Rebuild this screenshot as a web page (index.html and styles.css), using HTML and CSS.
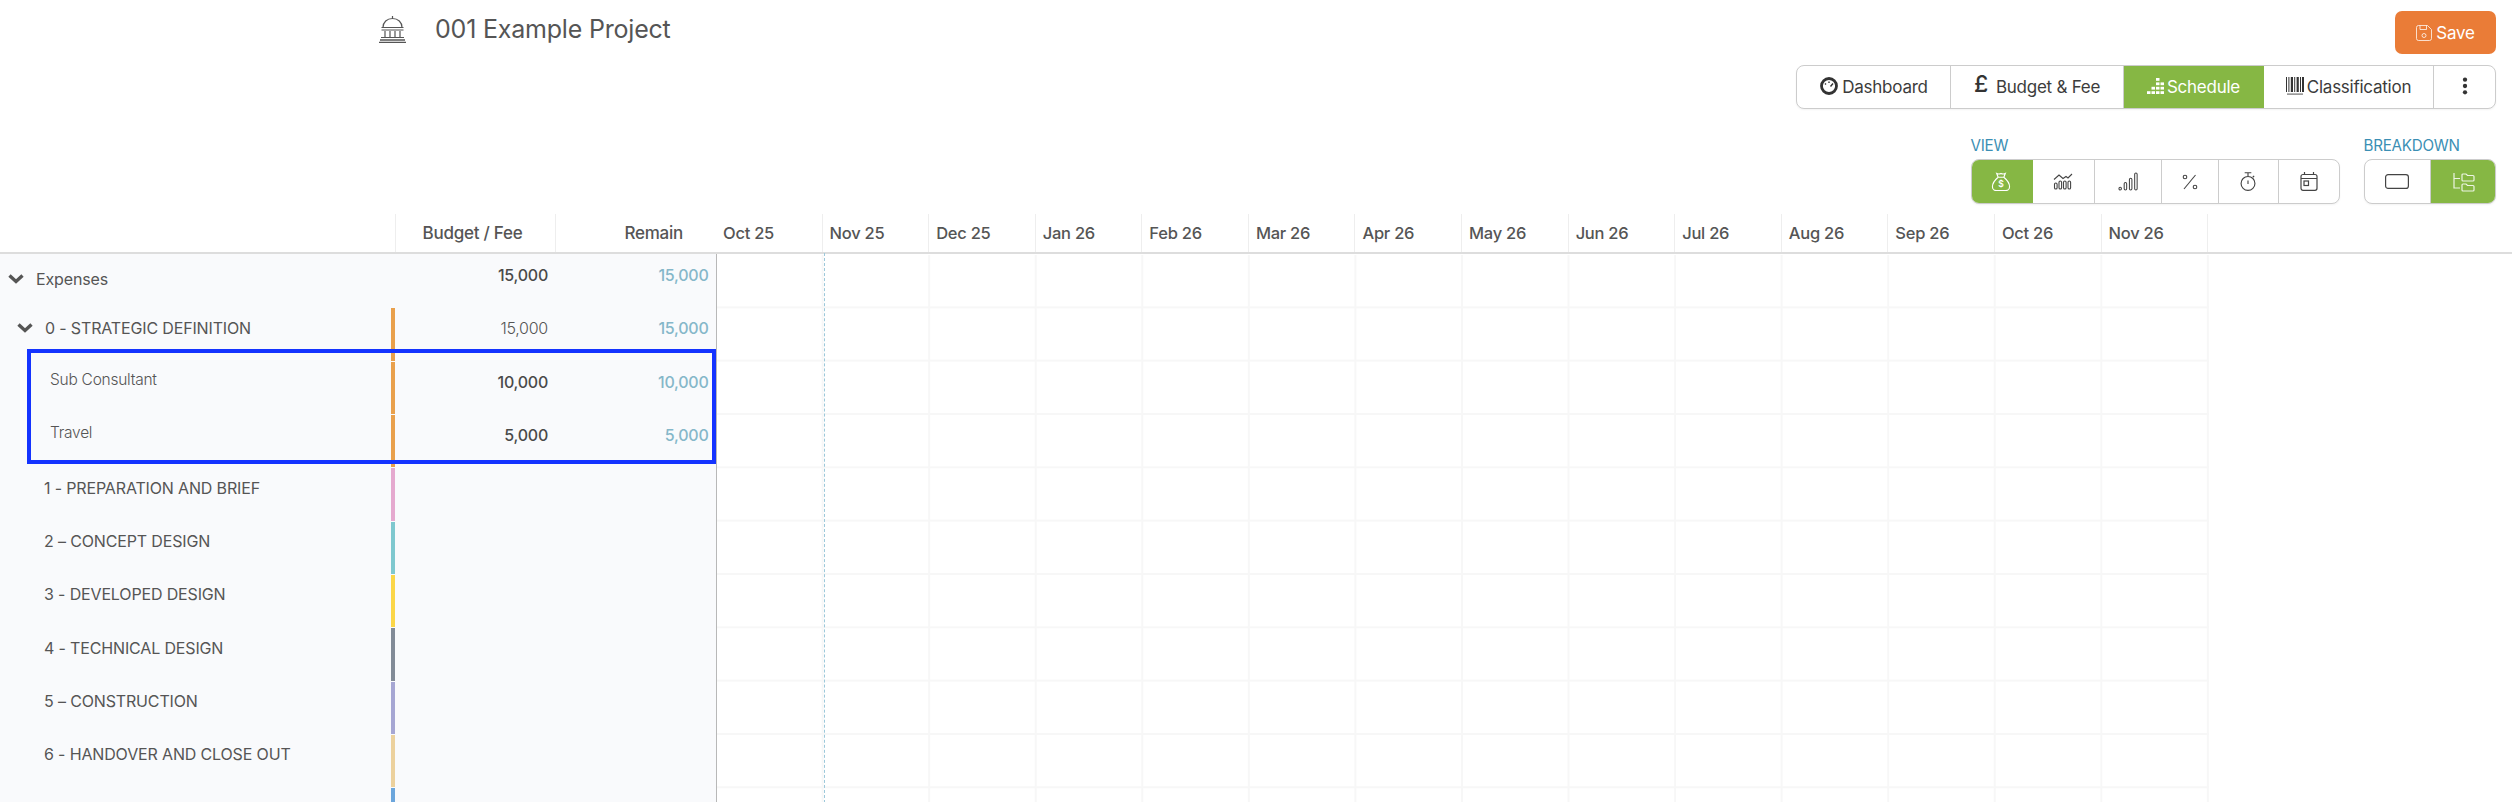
FILE: index.html
```html
<!DOCTYPE html>
<html lang="en">
<head>
<meta charset="utf-8">
<title>001 Example Project</title>
<link rel="stylesheet" href="styles.css">
</head>
<body>
<div class="page">
  <header class="topbar">
    <div class="project">
      <svg class="bank" viewBox="0 0 27 27" fill="none" stroke="#555" stroke-width="1.2"><path d="M13.5 0v2.5M4 11.5C4 6 8 2.5 13.5 2.5S23 6 23 11.5M2.5 11.5h22M2.5 14h22M6 15v6M11 15v6M16 15v6M21 15v6M2 21.5h23"/><path d="M1 24h25M0 26.5h27" stroke-width="1.4"/></svg>
      <h1 class="title">001 Example Project</h1>
    </div>
    <button class="save">
      <svg class="ico-save" viewBox="0 0 16 16" fill="none" stroke="#fff" stroke-opacity=".75" stroke-width="1"><path d="M2.5.5h9l4 4v9a2 2 0 0 1-2 2h-11a2 2 0 0 1-2-2v-11a2 2 0 0 1 2-2z"/><path d="M4 .5v4h6.5v-4"/><circle cx="8" cy="10.5" r="2"/></svg>
      <span>Save</span>
    </button>
  </header>

  <nav class="tabs-row">
    <div class="group tabs">
      <div class="tab w-dash">
        <svg class="i-dash" viewBox="0 0 20 18" fill="none" stroke="#333"><circle cx="10" cy="9" r="7.5" stroke-width="2.8"/><path d="M10 4.5v1.5M6 6.5l1 1M14 6.5l-2.5 3" stroke-width="1.4"/></svg>
        <span>Dashboard</span>
      </div>
      <div class="tab w-budget"><span class="pound">£</span><span>Budget &amp; Fee</span></div>
      <div class="tab w-sched active">
        <svg class="i-sched" viewBox="0 0 17 16" fill="#fff"><rect x="0" y="13.2" width="3.5" height="2.8"/><rect x="4.500" y="8.800" width="3.5" height="2.8"/><rect x="4.500" y="13.2" width="3.5" height="2.8"/><rect x="9" y="0" width="3.5" height="2.8"/><rect x="9" y="4.400" width="3.5" height="2.8"/><rect x="9" y="8.800" width="3.5" height="2.8"/><rect x="9" y="13.2" width="3.5" height="2.8"/><rect x="13.500" y="4.400" width="3.5" height="2.8"/><rect x="13.500" y="8.800" width="3.5" height="2.8"/><rect x="13.500" y="13.2" width="3.5" height="2.8"/></svg>
        <span>Schedule</span>
      </div>
      <div class="tab w-class">
        <svg class="i-bar" viewBox="0 0 18 18" fill="#333"><rect x="0" y="0" width="1" height="15"/><rect x="2.4" y="0" width="1" height="15"/><rect x="4.8" y="0" width="2.2" height="15"/><rect x="8.2" y="0" width="1" height="15"/><rect x="10.6" y="0" width="2.2" height="15"/><rect x="14" y="0" width="1" height="15"/><rect x="16" y="0" width="2" height="15"/><rect x="1" y="16.5" width="16" height="1.2" opacity=".7"/></svg>
        <span>Classification</span>
      </div>
      <div class="tab w-more">
        <svg class="i-more" viewBox="0 0 6 20" fill="#333"><circle cx="3" cy="3" r="2.4"/><circle cx="3" cy="10" r="2.4"/><circle cx="3" cy="17" r="2.4"/></svg>
      </div>
    </div>
  </nav>

  <section class="options">
    <div class="opt">
      <div class="opt-label">VIEW</div>
      <div class="group small">
        <div class="tab v1 active">
          <svg class="i-view" viewBox="0 0 20 20" fill="none" stroke="#fff" stroke-width="1.2"><path d="M7 5.5L5.5 1.5c1.5.8 3 .8 4.5 0 1.5.8 3 .8 4.5 0L13 5.5M7 5.5h6M7 5.5C4 8 1 12 1 15.5 1 18 3 19.500 5 19.500h10c2 0 4-1.500 4-4C19 12 16 8 13 5.500"/><text x="10" y="15.500" font-size="9" font-family="Inter" font-weight="600" fill="#fff" stroke="none" text-anchor="middle">$</text></svg>
        </div>
        <div class="tab v2">
          <svg class="i-view" viewBox="0 0 20 17" fill="none" stroke="#444" stroke-width="1.100"><path d="M1 6.500L6 2l4 3.500 3-2 2 1.500 4-4"/><rect x="1.500" y="10" width="2.600" height="6" rx="1.300"/><rect x="6" y="8" width="2.600" height="8" rx="1.300"/><rect x="10.500" y="8" width="2.600" height="8" rx="1.300"/><rect x="15" y="8" width="2.600" height="8" rx="1.300"/></svg>
        </div>
        <div class="tab v3">
          <svg class="i-view" viewBox="0 0 21 19" fill="none" stroke="#444" stroke-width="1.100"><rect x="1" y="15.500" width="2.600" height="3" rx="1.300"/><rect x="6.500" y="10.500" width="2.600" height="8" rx="1.300"/><rect x="12" y="6" width="2.600" height="12.500" rx="1.300"/><rect x="17.500" y=".5" width="2.600" height="18" rx="1.300"/></svg>
        </div>
        <div class="tab v4">
          <svg class="i-percent" viewBox="0 0 16 16" fill="none" stroke="#444" stroke-width="1.100"><path d="M13.500 1L2 15"/><circle cx="3" cy="3" r="1.800"/><circle cx="13" cy="13" r="1.800"/></svg>
        </div>
        <div class="tab v5">
          <svg class="i-view" viewBox="0 0 17 20" fill="none" stroke="#444" stroke-width="1.200"><path d="M5 .8h7M8.500 .8v3.400M13.500 5.500l1.500-1.500M8.500 9v3.500"/><circle cx="8.500" cy="12" r="7.300"/></svg>
        </div>
        <div class="tab v6">
          <svg class="i-view" viewBox="0 0 18 19" fill="none" stroke="#444" stroke-width="1.200"><rect x="1" y="2.500" width="16" height="15.800" rx="2"/><path d="M4.500 0v3M13.500 0v3M1 6.500h16"/><rect x="4" y="9" width="4.500" height="4.500"/></svg>
        </div>
      </div>
    </div>
    <div class="opt">
      <div class="opt-label">BREAKDOWN</div>
      <div class="group small">
        <div class="tab b1"><svg class="i-rect" viewBox="0 0 24 15" fill="none" stroke="#444" stroke-width="1.200"><rect x=".6" y=".6" width="22.800" height="13.800" rx="2.500"/></svg></div>
        <div class="tab b1 active"><svg class="i-tree" viewBox="0 0 22 20" fill="none" stroke="#fff" stroke-opacity=".85" stroke-width="1.200"><path d="M1 1v15h6M1 6.500h6"/><path d="M9 3a1 1 0 0 1 1-1h3l1.500 1.500H20a1 1 0 0 1 1 1V8a1 1 0 0 1-1 1H10a1 1 0 0 1-1-1zM9 13a1 1 0 0 1 1-1h3l1.500 1.500H20a1 1 0 0 1 1 1V18a1 1 0 0 1-1 1H10a1 1 0 0 1-1-1z"/></svg></div>
      </div>
    </div>
  </section>

  <div class="thead">
    <div class="th th-name"></div>
    <div class="th th-budget">Budget / Fee</div>
    <div class="th th-remain">Remain</div>
    <div class="months">
      <div class="month">Oct 25</div><div class="month">Nov 25</div><div class="month">Dec 25</div><div class="month">Jan 26</div><div class="month">Feb 26</div><div class="month">Mar 26</div><div class="month">Apr 26</div><div class="month">May 26</div><div class="month">Jun 26</div><div class="month">Jul 26</div><div class="month">Aug 26</div><div class="month">Sep 26</div><div class="month">Oct 26</div><div class="month">Nov 26</div>
    </div>
  </div>

  <div class="tbody">
    <div class="left">
      <div class="row">
        <div class="name lvl0"><svg class="chev" viewBox="0 0 16 10" fill="none" stroke="#555" stroke-width="3.400"><path d="M1.500 1.500L8 7.500l6.500-6"/></svg><span>Expenses</span></div>
        <div class="bar"></div>
        <div class="num strong top0">15,000</div>
        <div class="num rem top0">15,000</div>
      </div>
      <div class="row">
        <div class="name lvl1"><svg class="chev" viewBox="0 0 16 10" fill="none" stroke="#555" stroke-width="3.400"><path d="M1.500 1.500L8 7.500l6.500-6"/></svg><span>0 - STRATEGIC DEFINITION</span></div>
        <div class="bar orange"></div>
        <div class="num light">15,000</div>
        <div class="num rem">15,000</div>
      </div>
      <div class="row">
        <div class="name lvl2">Sub Consultant</div>
        <div class="bar orange"></div>
        <div class="num strong sub">10,000</div>
        <div class="num rem sub">10,000</div>
      </div>
      <div class="row">
        <div class="name lvl2">Travel</div>
        <div class="bar orange"></div>
        <div class="num strong sub">5,000</div>
        <div class="num rem sub">5,000</div>
      </div>
      <div class="row"><div class="name stage">1 - PREPARATION AND BRIEF</div><div class="bar pink"></div></div>
      <div class="row"><div class="name stage">2 – CONCEPT DESIGN</div><div class="bar teal"></div></div>
      <div class="row"><div class="name stage">3 - DEVELOPED DESIGN</div><div class="bar yellow"></div></div>
      <div class="row"><div class="name stage">4 - TECHNICAL DESIGN</div><div class="bar slate"></div></div>
      <div class="row"><div class="name stage">5 – CONSTRUCTION</div><div class="bar lavender"></div></div>
      <div class="row"><div class="name stage">6 - HANDOVER AND CLOSE OUT</div><div class="bar sand"></div></div>
      <div class="row"><div class="name stage">7 - USE</div><div class="bar blue"></div></div>
      <div class="highlight"></div>
    </div>
    <div class="timeline"><div class="today"></div></div>
  </div>
</div>
</body>
</html>
```
FILE: styles.css
```css
* { box-sizing: border-box; }
html, body { margin: 0; padding: 0; background: #fff; }
body { font-family: Inter, "Liberation Sans", sans-serif; color: #555; letter-spacing: -.25px; }
.page { width: 2512px; height: 802px; overflow: hidden; }

.topbar { display: flex; justify-content: space-between; align-items: flex-start; padding: 11px 16px 0 379px; height: 54px; }
.project { display: flex; align-items: center; height: 38px; gap: 29px; margin-top: -1px; }
.bank { width: 27px; height: 27px; }
.title { margin: 0; font-size: 25px; font-weight: 400; color: #555; letter-spacing: -.2px; }
.save { display: flex; align-items: center; justify-content: center; gap: 4px; width: 101px; height: 43px; background: #ea7c37; border: 0; border-radius: 7px; color: #fff; font: 400 17px Inter, sans-serif; letter-spacing: -.25px; }
.ico-save { width: 16px; height: 16px; }

.tabs-row { display: flex; justify-content: flex-end; padding-right: 16px; margin-top: 11px; }
.group { display: flex; height: 44px; border: 1.5px solid #ccc; border-radius: 8px; overflow: hidden; background: #fff; box-shadow: 0 1px 2px rgba(0,0,0,.05); }
.group.small { height: 45px; }
.tab { display: flex; align-items: center; justify-content: center; gap: 3px; border-right: 1.5px solid #ccc; font-size: 17px; color: #3c3c3c; height: 100%; }
.tab:last-child { border-right: 0; }
.tab.active { background: #86b744; color: #fff; border-right-color: #86b744; margin: -1.5px 0; height: calc(100% + 3px); }
.group.small .tab.active:first-child { margin-left: -1.5px; }
.group.small .tab.active:last-child { margin-right: -1.5px; }
.w-dash { width: 154px; }
.w-budget { width: 173px; gap: 8px; }
.w-sched { width: 140px; }
.w-class { width: 170px; }
.w-more { width: 61px; }
.pound { font-size: 23px; font-weight: 500; margin-top: -6px; color: #333; }
.i-dash { width: 20px; height: 18px; margin-top: -2px; }
.i-sched { width: 17px; height: 16px; margin-top: -2px; }
.i-bar { width: 18px; height: 18px; margin-top: -2px; }
.i-more { width: 6px; height: 18px; margin-top: -3px; }

.options { display: flex; justify-content: flex-end; gap: 24px; padding-right: 16px; margin-top: 28px; }
.opt-label { height: 22px; font-size: 15.200px; line-height: 18px; color: #3b8fb4; }
.v1 { width: 63px; }
.v2 { width: 61.500px; }
.v3 { width: 67px; }
.v4 { width: 57px; }
.v5 { width: 60px; }
.v6 { width: 60px; }
.b1 { width: 66px; }
.i-view { height: 19px; width: 20px; }
.i-percent { height: 16px; width: 16px; }
.i-rect { width: 24px; height: 15px; }
.i-tree { width: 22px; height: 20px; }

.thead { display: flex; height: 40px; margin-top: 10px; border-bottom: 2px solid #ddd; }
.th { font-size: 17px; font-weight: 500; line-height: 38px; color: #555; }
.th-name { width: 396px; border-right: 1px solid #eee; }
.th-budget { width: 160px; text-align: center; padding-right: 6px; border-right: 1px solid #eee; }
.th-remain { width: 160px; text-align: right; padding-right: 33px; }
.months { display: flex; width: 1492px; }
.month { flex: 1 1 0; font-size: 16.500px; font-weight: 500; line-height: 38px; padding-left: 7px; border-right: 1.500px solid #eee; color: #555; }

.tbody { display: flex; height: 548px; }
.left { position: relative; flex: 0 0 716px; padding-top: 1px; background: #f9fafc; border-right: 1px solid #b8b8b8; }
.row { display: flex; height: 53.330px; }
.name { width: 391px; display: flex; align-items: flex-start; font-size: 16px; color: #555; line-height: 20px; letter-spacing: -.15px; }
.lvl0 { padding: 14px 0 0 8px; }
.lvl1 { padding: 10px 0 0 17px; }
.lvl2 { padding: 3px 0 0 50px; font-size: 15.500px; font-weight: 300; line-height: 20px; margin-top: 5px; letter-spacing: -.25px; }
.stage { padding: 1.500px 0 0 44px; margin-top: 8px; font-weight: 400; }
.chev { width: 16px; height: 10px; margin: 5px 12px 0 0; flex: none; }
.bar { width: 4px; height: 52.300px; background: transparent; }
.orange { background: #e9a04c; }
.pink { background: #e5a9cf; }
.teal { background: #7fc8cf; }
.yellow { background: #fbd648; }
.slate { background: #828b97; }
.lavender { background: #a6a6d3; }
.sand { background: #ecd19d; }
.blue { background: #6ca6dc; }
.num { width: 160px; font-size: 16px; text-align: right; padding: 10px 7px 0 0; line-height: 20px; }
.num.rem { width: 160.500px; color: #85b7c9; font-weight: 500; }
.num.strong { font-weight: 500; color: #4a4a4a; }
.num.light { font-weight: 300; color: #555; }
.num.top0 { padding-top: 9.500px; }
.num.sub { padding-top: 10px; }
.highlight { position: absolute; left: 27px; top: 95px; width: 689px; height: 115px; border: 4px solid #1433ff; }

.timeline { position: relative; width: 1492px; height: 100%; margin-top: 1px;
  background-image: linear-gradient(to right, transparent 104.570px, #f7f7f7 104.570px), linear-gradient(to bottom, transparent 51.330px, #f7f7f7 51.330px);
  background-size: 106.570px 100%, 100% 53.330px; }
.today { position: absolute; left: 107px; top: -2px; bottom: 0; border-left: 1px dashed #9cc8da; }
```
